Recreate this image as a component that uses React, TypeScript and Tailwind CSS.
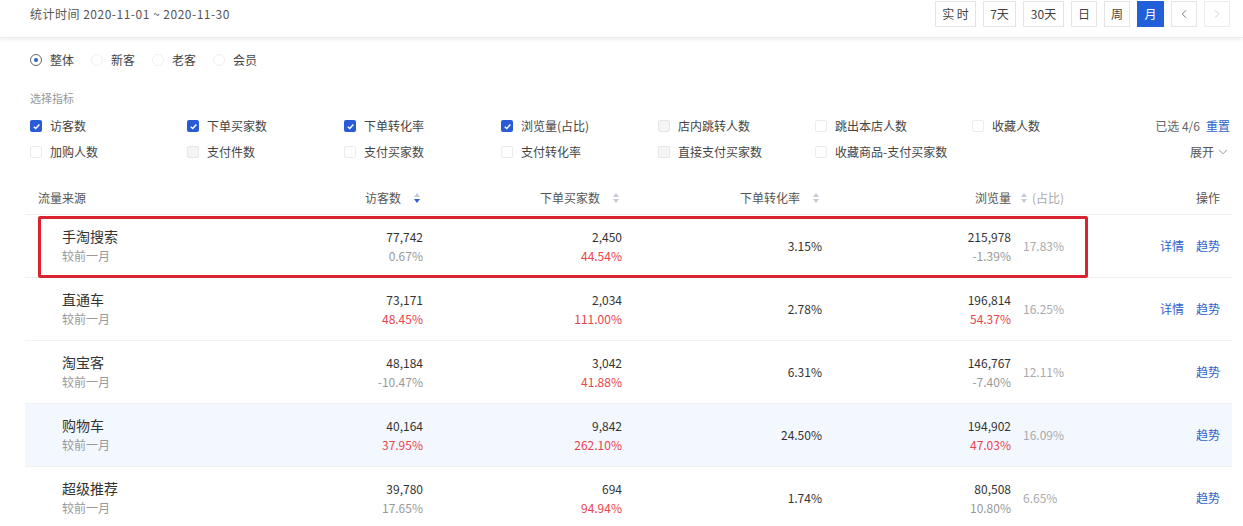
import React from "react";
import { ChevronDown, ChevronLeft, ChevronRight } from "lucide-react";

const RED = "text-[#e8434d]";
const GRAY = "text-[#999]";

type Row = {
  name: string;
  v1: string; p1: string; r1: boolean;
  v2: string; p2: string; r2: boolean;
  rate: string;
  v4: string; p4: string; r4: boolean;
  ratio: string;
  detail: boolean;
  hl?: boolean;
  boxed?: boolean;
};

const rows: Row[] = [
  { name: "手淘搜索", v1: "77,742", p1: "0.67%", r1: false, v2: "2,450", p2: "44.54%", r2: true, rate: "3.15%", v4: "215,978", p4: "-1.39%", r4: false, ratio: "17.83%", detail: true, boxed: true },
  { name: "直通车", v1: "73,171", p1: "48.45%", r1: true, v2: "2,034", p2: "111.00%", r2: true, rate: "2.78%", v4: "196,814", p4: "54.37%", r4: true, ratio: "16.25%", detail: true },
  { name: "淘宝客", v1: "48,184", p1: "-10.47%", r1: false, v2: "3,042", p2: "41.88%", r2: true, rate: "6.31%", v4: "146,767", p4: "-7.40%", r4: false, ratio: "12.11%", detail: false },
  { name: "购物车", v1: "40,164", p1: "37.95%", r1: true, v2: "9,842", p2: "262.10%", r2: true, rate: "24.50%", v4: "194,902", p4: "47.03%", r4: true, ratio: "16.09%", detail: false, hl: true },
  { name: "超级推荐", v1: "39,780", p1: "17.65%", r1: false, v2: "694", p2: "94.94%", r2: true, rate: "1.74%", v4: "80,508", p4: "10.80%", r4: false, ratio: "6.65%", detail: false },
];

const checks: { label: string; checked: boolean; dis?: boolean }[][] = [
  [
    { label: "访客数", checked: true },
    { label: "下单买家数", checked: true },
    { label: "下单转化率", checked: true },
    { label: "浏览量(占比)", checked: true },
    { label: "店内跳转人数", checked: false, dis: true },
    { label: "跳出本店人数", checked: false },
    { label: "收藏人数", checked: false },
  ],
  [
    { label: "加购人数", checked: false },
    { label: "支付件数", checked: false, dis: true },
    { label: "支付买家数", checked: false },
    { label: "支付转化率", checked: false },
    { label: "直接支付买家数", checked: false, dis: true },
    { label: "收藏商品-支付买家数", checked: false },
    { label: "", checked: false },
  ],
];

function SortIcon({ active }: { active?: boolean }) {
  return (
    <svg width="8" height="12" viewBox="0 0 8 12" className="shrink-0">
      <path d="M4 1 L7 5 L1 5 Z" fill="#c4c8d0" />
      <path d="M4 11 L7 7 L1 7 Z" fill={active ? "#2d5fd0" : "#c4c8d0"} />
    </svg>
  );
}

function Checkbox({ checked, dis }: { checked: boolean; dis?: boolean }) {
  if (checked) {
    return (
      <span className="w-[12px] h-[12px] rounded-[2px] bg-[#2a5bd7] flex items-center justify-center shrink-0">
        <svg width="9" height="9" viewBox="0 0 10 10">
          <path d="M2 5.2 L4.2 7.3 L8.2 2.8" stroke="#fff" strokeWidth="1.6" fill="none" />
        </svg>
      </span>
    );
  }
  return (
    <span
      className={
        dis
          ? "w-[12px] h-[12px] rounded-[2px] border border-[#e6e6e6] bg-[#f5f5f5] shrink-0"
          : "w-[12px] h-[12px] rounded-[2px] border border-[#ececec] bg-white shrink-0"
      }
    />
  );
}

const btns: { t: string; w: string }[] = [
  { t: "实 时", w: "w-[41px]" },
  { t: "7天", w: "w-[33px]" },
  { t: "30天", w: "w-[41px]" },
  { t: "日", w: "w-[26px]" },
  { t: "周", w: "w-[26px]" },
];

export default function App() {
  return (
    <div
      className="w-[1243px] h-[526px] bg-white overflow-hidden text-[#333]"
      style={{ fontFamily: '"Noto Sans CJK SC", "Noto Sans", sans-serif' }}
    >
      {/* top bar */}
      <div className="h-[38px] flex justify-between items-start pl-[30px] pr-[13px] border-b border-[#ececec] shadow-[0_2px_4px_rgba(0,0,0,0.06)]">
        <div className="mt-[6px] text-[12px] leading-[16px] text-[#555] tracking-[0.5px]">统计时间 2020-11-01 ~ 2020-11-30</div>
        <div className="flex items-center gap-[7px] mt-[1px]">
          {btns.map((b) => (
            <div
              key={b.t}
              className={"h-[26px] flex items-center justify-center border border-[#e5e5e5] text-[12px] text-[#444] bg-white " + b.w}
            >
              {b.t}
            </div>
          ))}
          <div className="h-[26px] w-[27px] flex items-center justify-center bg-[#2160d8] text-white text-[12px]">月</div>
          <div className="h-[26px] w-[26px] flex items-center justify-center border border-[#e5e5e5] text-[#666]">
            <ChevronLeft size={14} strokeWidth={1.5} />
          </div>
          <div className="h-[26px] w-[26px] flex items-center justify-center border border-[#ededed] text-[#ccc]">
            <ChevronRight size={14} strokeWidth={1.5} />
          </div>
        </div>
      </div>

      {/* filters */}
      <div className="pl-[30px] pr-[13px]">
        <div className="mt-[12px] h-[20px] flex items-center gap-[17px] text-[12px]">
          {["整体", "新客", "老客", "会员"].map((l, i) => (
            <div key={l} className="flex items-center gap-[8px]">
              {i === 0 ? (
                <span className="w-[12px] h-[12px] rounded-full border border-[#666] flex items-center justify-center">
                  <span className="w-[4px] h-[4px] rounded-full bg-[#2d5fd0]" />
                </span>
              ) : (
                <span className="w-[12px] h-[12px] rounded-full border border-[#f0f0f0]" />
              )}
              <span className="w-[24px] text-[#444]">{l}</span>
            </div>
          ))}
        </div>
        <div className="mt-[20px] text-[11px] leading-[16px] text-[#999]">选择指标</div>
        <div className="mt-[7px]">
          {checks.map((row, ri) => (
            <div key={ri} className="h-[26px] flex items-center">
              <div className="grid grid-cols-[repeat(7,157px)]">
                {row.map((c, ci) => (
                  <div key={ci} className="flex items-center gap-[8px] text-[12px] text-[#444]">
                    {c.label ? <Checkbox checked={c.checked} dis={c.dis} /> : null}
                    <span>{c.label}</span>
                  </div>
                ))}
              </div>
              <div className="flex-1 flex justify-end items-center text-[12px]">
                {ri === 0 ? (
                  <>
                    <span className="text-[#666]">已选 4/6</span>
                    <span className="ml-[6px] text-[#2e62cd]">重置</span>
                  </>
                ) : (
                  <span className="flex items-center text-[#555]">
                    展开
                    <ChevronDown size={14} strokeWidth={1.5} className="ml-[2px] text-[#888]" />
                  </span>
                )}
              </div>
            </div>
          ))}
        </div>
      </div>

      {/* table */}
      <div className="ml-[25px] w-[1207px] mt-[16px] text-[12px]">
        <div className="h-[34px] flex items-center border-b border-[#eef0f3] text-[#555]">
          <div className="w-[205px] pl-[13px]">流量来源</div>
          <div className="w-[193px] flex justify-end items-center gap-[12px] pr-[2px]">
            <span>访客数</span>
            <SortIcon active />
          </div>
          <div className="w-[199px] flex justify-end items-center gap-[12px] pr-[2px]">
            <span>下单买家数</span>
            <SortIcon />
          </div>
          <div className="w-[200px] flex justify-end items-center gap-[12px] pr-[2px]">
            <span>下单转化率</span>
            <SortIcon />
          </div>
          <div className="w-[189px] flex justify-end">
            <span>浏览量</span>
          </div>
          <div className="w-[77px] flex items-center pl-[9px] gap-[4px]">
            <SortIcon />
            <span className="text-[#aaa]">(占比)</span>
          </div>
          <div className="w-[144px] flex justify-end pr-[12px]">操作</div>
        </div>

        {rows.map((r) => (
          <div
            key={r.name}
            className={
              "relative h-[63px] flex items-center border-b border-[#f0f0f0] " + (r.hl ? "bg-[#f3f8fe]" : "bg-white")
            }
          >
            <div className="w-[205px] pl-[37px]">
              <div className="text-[14px] leading-[19px] text-[#333]">{r.name}</div>
              <div className="text-[12px] leading-[19px] text-[#999]">较前一月</div>
            </div>
            <div className="w-[193px] text-right leading-[19px]">
              <div className="text-[#333]">{r.v1}</div>
              <div className={r.r1 ? RED : GRAY}>{r.p1}</div>
            </div>
            <div className="w-[199px] text-right leading-[19px]">
              <div className="text-[#333]">{r.v2}</div>
              <div className={r.r2 ? RED : GRAY}>{r.p2}</div>
            </div>
            <div className="w-[200px] text-right text-[#333]">{r.rate}</div>
            <div className="w-[189px] text-right leading-[19px]">
              <div className="text-[#333]">{r.v4}</div>
              <div className={r.r4 ? RED : GRAY}>{r.p4}</div>
            </div>
            <div className="w-[77px] pl-[12px] text-[#aaa]">{r.ratio}</div>
            <div className="w-[144px] flex justify-end gap-[12px] pr-[12px] text-[#2e62cd]">
              {r.detail ? <span>详情</span> : null}
              <span>趋势</span>
            </div>
            {r.boxed ? (
              <div className="absolute left-[13px] top-[1px] w-[1050px] h-[62px] border-[3px] border-[#d9232e] rounded-[2px] pointer-events-none" />
            ) : null}
          </div>
        ))}
      </div>
    </div>
  );
}
